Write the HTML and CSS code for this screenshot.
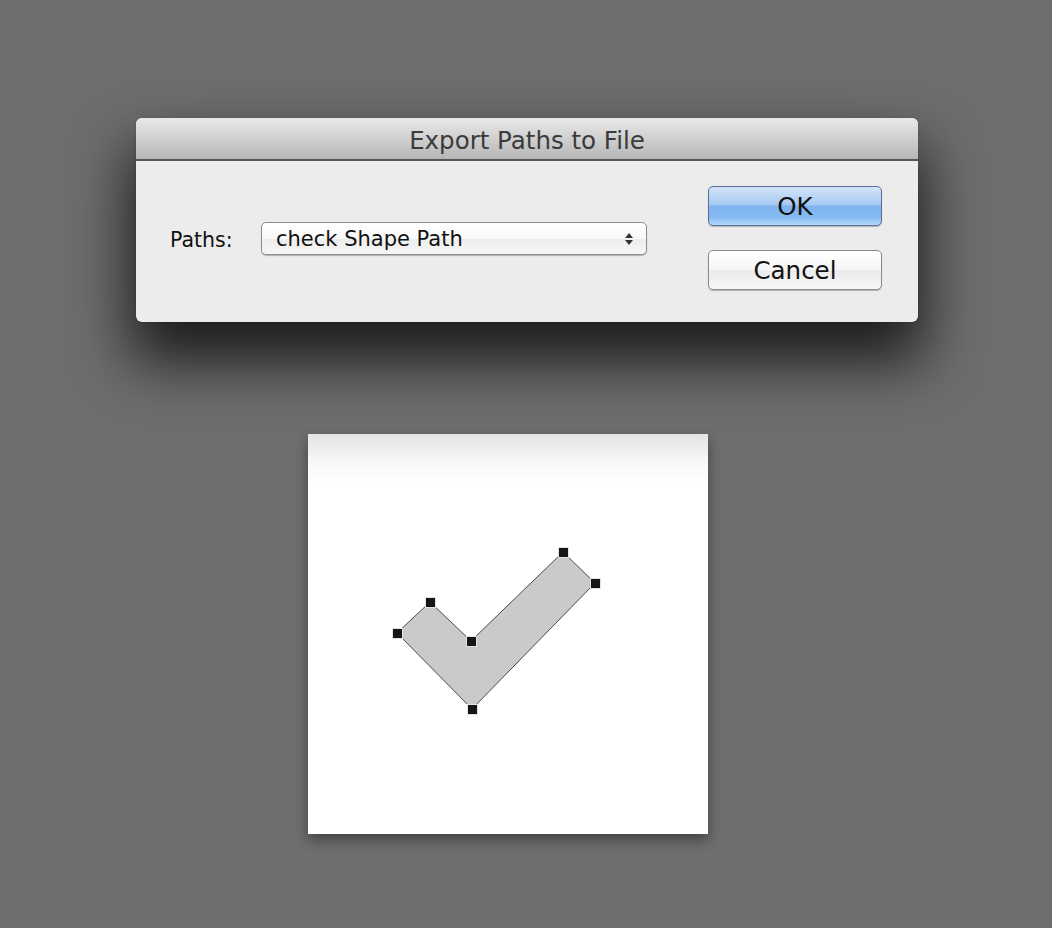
FILE: index.html
```html
<!DOCTYPE html>
<html>
<head>
<meta charset="utf-8">
<link rel="stylesheet" href="styles.css">
</head>
<body>
<div class="stage">
  <div class="dialog">
    <div class="titlebar">Export Paths to File</div>
    <div class="body">
      <div class="field">
        <span class="label">Paths:</span>
        <div class="select">
          <span class="select-text">check Shape Path</span>
          <svg class="arrows" width="10" height="14" viewBox="0 0 10 14">
            <path d="M5 1 L9 6 L1 6 Z" fill="#333"/>
            <path d="M5 13 L9 8 L1 8 Z" fill="#333"/>
          </svg>
        </div>
      </div>
      <div class="buttons">
        <button class="btn btn-default">OK</button>
        <button class="btn">Cancel</button>
      </div>
    </div>
  </div>
  <div class="canvas">
    <svg class="shape" width="400" height="400" viewBox="0 0 400 400">
      <polygon points="89,199 122,168 163,207 255,118 287,149 164,275" fill="#c9cac9" stroke="#4a4a4a" stroke-width="1"/>
      <g fill="#151515" stroke="#e2e2e2" stroke-width="1">
        <rect x="84.5" y="194.5" width="10" height="10"/>
        <rect x="117.5" y="163.5" width="10" height="10"/>
        <rect x="158.5" y="202.5" width="10" height="10"/>
        <rect x="250.5" y="113.5" width="10" height="10"/>
        <rect x="282.5" y="144.5" width="10" height="10"/>
        <rect x="159.5" y="270.5" width="10" height="10"/>
      </g>
    </svg>
  </div>
</div>
</body>
</html>
```
FILE: styles.css
```css
html, body {
  margin: 0;
  padding: 0;
}
body {
  background: #6e6e6e;
  width: 1052px;
  height: 928px;
  overflow: hidden;
  font-family: "DejaVu Sans", sans-serif;
}
.stage {
  display: flex;
  flex-direction: column;
  padding-top: 118px;
}
.dialog {
  margin-left: 136px;
  width: 782px;
  height: 204px;
  border-radius: 6px;
  background: #ececec;
  overflow: hidden;
  box-shadow: 0 34px 60px 6px rgba(0,0,0,0.75), 0 0 1px rgba(0,0,0,0.6);
  display: flex;
  flex-direction: column;
}
.titlebar {
  height: 41px;
  border-bottom: 2px solid #565656;
  background: linear-gradient(#e9e9e9, #b6b6b6);
  color: #3b3b3b;
  font-size: 24.5px;
  line-height: 46px;
  text-align: center;
  overflow: hidden;
}
.body {
  flex: 1;
  display: flex;
  justify-content: space-between;
  padding: 25px 36px 0 34px;
}
.field {
  display: flex;
  align-items: center;
  height: 32px;
  margin-top: 36px;
}
.label {
  font-size: 20.5px;
  color: #111;
  width: 91px;
  padding-top: 3px;
}
.select {
  box-sizing: border-box;
  width: 386px;
  height: 33px;
  border: 1px solid #8e8e8e;
  border-radius: 5px;
  background: linear-gradient(#ffffff, #f9f9f9 50%, #eeeeee 52%, #f6f6f6);
  box-shadow: 0 1px 1px rgba(0,0,0,0.25);
  display: flex;
  align-items: center;
  justify-content: space-between;
  padding: 2px 12px 0 14px;
}
.select-text {
  font-size: 21px;
  color: #111;
}
.arrows {
  display: block;
}
.buttons {
  display: flex;
  flex-direction: column;
  gap: 24px;
}
.btn {
  box-sizing: border-box;
  width: 174px;
  height: 40px;
  border: 1px solid #8a8a8a;
  border-radius: 5px;
  background: linear-gradient(#ffffff, #f6f6f6 50%, #ebebeb 52%, #f7f7f7);
  box-shadow: 0 1px 1px rgba(0,0,0,0.25);
  font-family: "DejaVu Sans", sans-serif;
  font-size: 24.5px;
  color: #111;
  padding: 1px 0 0 0;
}
.btn-default {
  border-color: #5a6f95;
  background: linear-gradient(#d3e4f8, #a8cbf3 45%, #7db2ee 52%, #86bbf1 80%, #b4d8f8);
}
.canvas {
  margin-left: 308px;
  margin-top: 112px;
  width: 400px;
  height: 400px;
  background: linear-gradient(#e4e4e4, #f8f8f8 30px, #ffffff 50px);
  box-shadow: 0 6px 12px rgba(0,0,0,0.4);
}
.shape {
  display: block;
}
```
